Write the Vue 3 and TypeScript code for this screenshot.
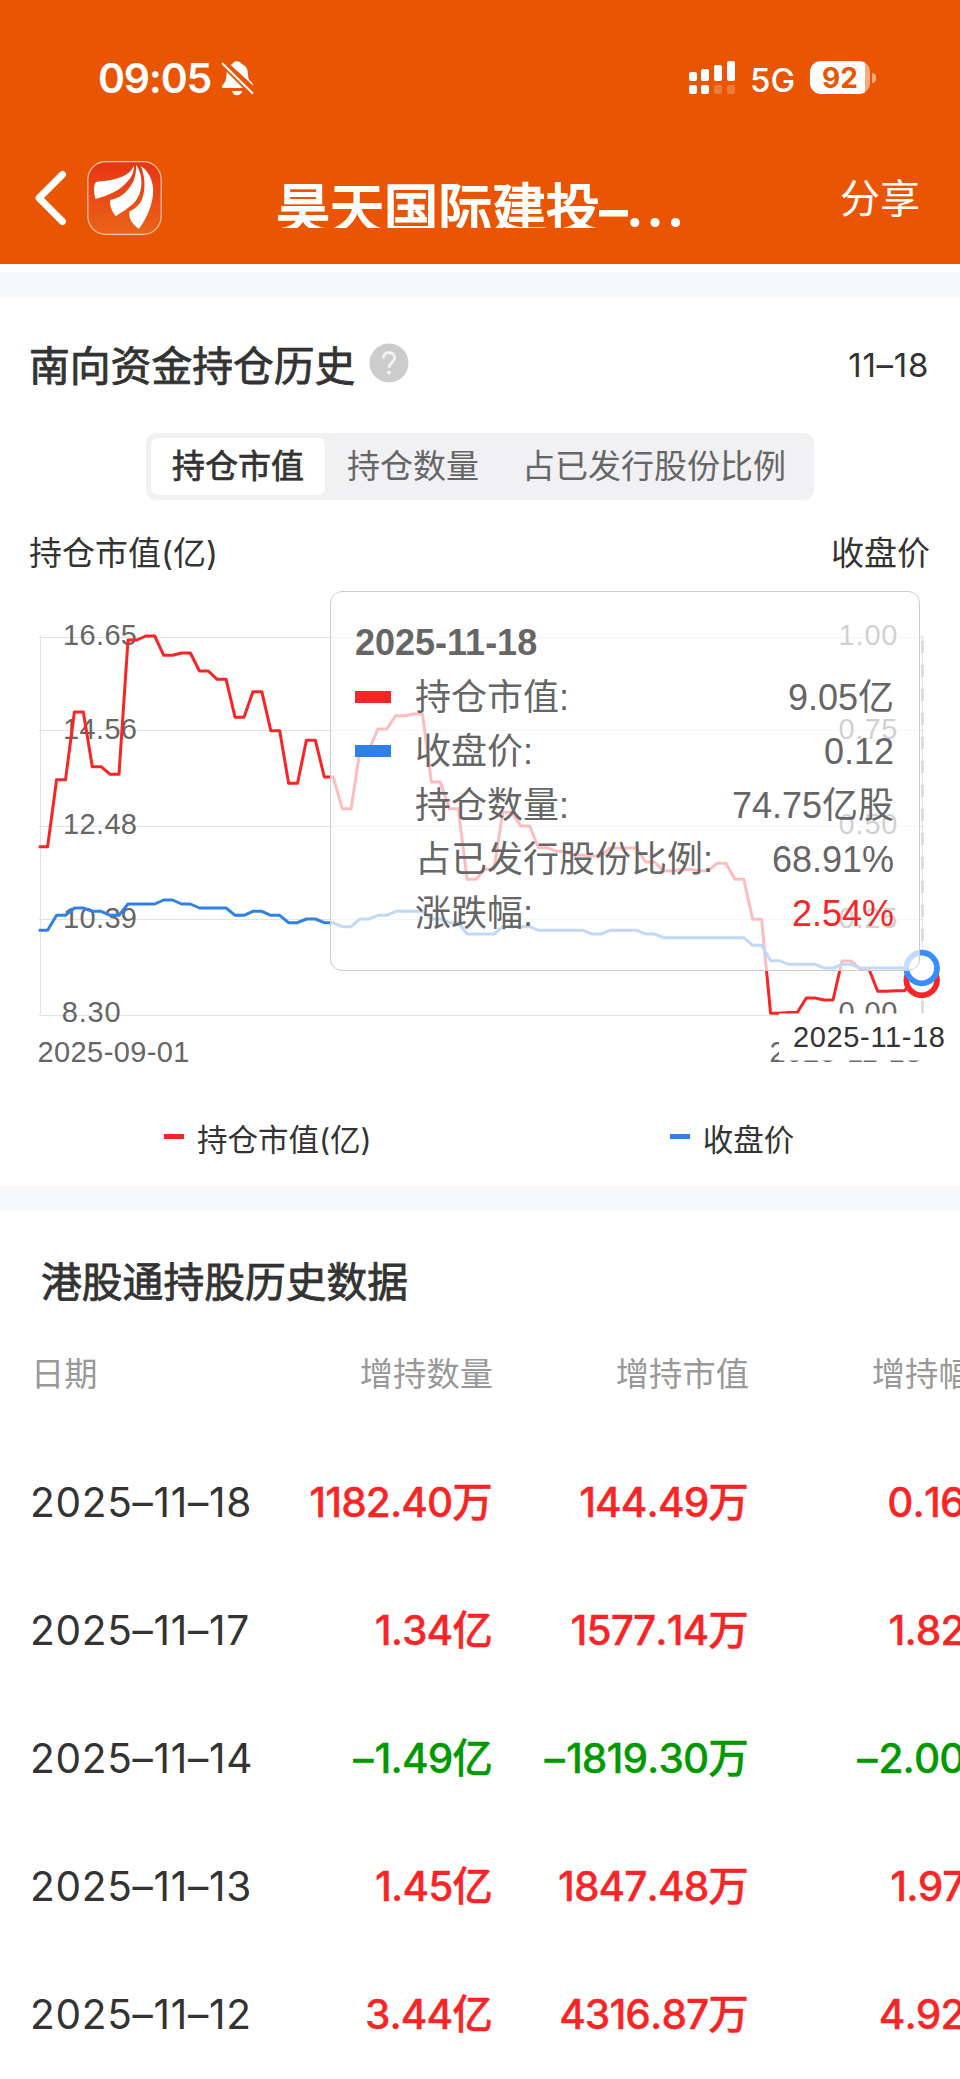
<script setup lang="ts">
interface HoldingRow {
  date: string
  amount: string
  value: string
  ratio: string
  down?: boolean
}

const tabs: string[] = ['持仓市值', '持仓数量', '占已发行股份比例']
const columns: string[] = ['日期', '增持数量', '增持市值', '增持幅度']

const rows: HoldingRow[] = [
  { date: '2025–11–18', amount: '1182.40万', value: '144.49万', ratio: '0.16%' },
  { date: '2025–11–17', amount: '1.34亿', value: '1577.14万', ratio: '1.82%' },
  { date: '2025–11–14', amount: '–1.49亿', value: '–1819.30万', ratio: '–2.00%', down: true },
  { date: '2025–11–13', amount: '1.45亿', value: '1847.48万', ratio: '1.97%' },
  { date: '2025–11–12', amount: '3.44亿', value: '4316.87万', ratio: '4.92%' },
]

const tips = [
  { label: '持仓市值:', value: '9.05亿', mark: 'red' },
  { label: '收盘价:', value: '0.12', mark: 'blue' },
  { label: '持仓数量:', value: '74.75亿股', mark: '' },
  { label: '占已发行股份比例:', value: '68.91%', mark: '' },
  { label: '涨跌幅:', value: '2.54%', mark: '', up: true },
]

// Each trading day is drawn as a flat step of two samples.
const X0 = 38.7
const STEP = 8.925
const marketValue: number[] = [
  846.7, 779.7, 712, 766.7, 774.3, 640, 636, 655.3, 653, 671, 679.3, 717.3, 691.7, 730.7, 783.3,
  740.3, 777, 808.7, 750, 729, 715.7, 714, 782, 808.7, 879.3, 869.3, 812.3, 826, 847.7, 851.3,
  855, 856, 848, 848, 862, 871, 869.5, 870.7, 863.3, 879.3, 919.3, 1013.3, 1012.5, 998, 1000,
  961, 968.5, 991.3, 990.8, 980,
]
const closePrice: number[] = [
  930.3, 915.3, 908, 911.3, 915.3, 904, 904, 900, 904, 908, 908, 915.3, 911.3, 915.3, 922.7, 919,
  922.7, 926.7, 919, 915.3, 911.3, 911.3, 919, 922.7, 934, 934, 926.7, 926.7, 930.3, 930.3, 930.3,
  934, 930.3, 930.3, 934, 937.7, 937.7, 937.7, 937.7, 937.7, 945.3, 960.7, 964.3, 964.3, 968,
  964.3, 968, 968, 968, 968,
]

function toPoints(values: number[]): string {
  return values
    .map((y, i) => `${(X0 + 2 * i * STEP).toFixed(1)},${y} ${(X0 + (2 * i + 1) * STEP).toFixed(1)},${y}`)
    .join(' ')
}

const redPoints = toPoints(marketValue)
const bluePoints = toPoints(closePrice)

const gridLines: number[] = [637.5, 730.5, 826.5, 919.5, 1015.5]
const leftLabels = [
  { text: '16.65', y: 645, x: 63, w: 74 },
  { text: '14.56', y: 739.3, x: 63, w: 74 },
  { text: '12.48', y: 833.7, x: 63, w: 74 },
  { text: '10.39', y: 928, x: 63, w: 74 },
  { text: '8.30', y: 1022.3, x: 61.7, w: 59 },
]
const rightLabels = [
  { text: '1.00', y: 645 },
  { text: '0.75', y: 739.3 },
  { text: '0.50', y: 833.7 },
  { text: '0.25', y: 928 },
  { text: '0.00', y: 1022.3 },
]
</script>

<template>
  <div class="page">
    <header class="header">
      <div class="status">
        <span class="clock">09:05</span>
        <svg class="bell" viewBox="663 60 99 108">
          <path d="M697 72C700 66 705 64 711 64S722 67 725 72C738 76 744 89 744 103C744 112 745 117 750 122L757 130C759 132 760 135 760 137L692 75Z" fill="#fff" />
          <path d="M680 95L729 144H669C665 144 665 139 668 135C677 125 679 118 680 95Z" fill="#fff" />
          <path d="M696 153H727C724 162 718 166 711 166S699 162 696 153Z" fill="#fff" />
          <path d="M668 71L757 159" stroke="#fff" stroke-width="6" stroke-linecap="round" />
        </svg>
        <svg class="signal" viewBox="0 0 46 33">
          <g fill="#fff">
            <rect x="0" y="11" width="8" height="9" rx="2" />
            <rect x="12" y="8" width="8" height="12" rx="2" />
            <rect x="25" y="4" width="8" height="16" rx="2" />
            <rect x="38" y="0" width="8" height="20" rx="2" />
            <rect x="0" y="24" width="8" height="9" rx="2" />
            <rect x="12" y="24" width="8" height="9" rx="2" />
            <rect x="25" y="24" width="8" height="9" rx="2" opacity=".22" />
            <rect x="38" y="24" width="8" height="9" rx="2" opacity=".22" />
          </g>
        </svg>
        <span class="network">5G</span>
        <div class="battery">
          <span class="level">92</span>
        </div>
        <i class="nub"></i>
      </div>
      <div class="nav">
        <svg class="back" viewBox="0 0 34 56">
          <path d="M28.5 4.5L5 28L28.5 51.5" fill="none" stroke="#fff" stroke-width="7" stroke-linecap="round" stroke-linejoin="round" />
        </svg>
        <svg class="logo" viewBox="262 363 224 222">
          <defs>
            <linearGradient id="logoFill" x1="0" y1="0" x2="0" y2="1">
              <stop offset="0" stop-color="#e73512" />
              <stop offset="1" stop-color="#ea6418" />
            </linearGradient>
          </defs>
          <rect x="264" y="365" width="220" height="218" rx="54" fill="url(#logoFill)" stroke="#fbc8ac" stroke-width="3.5" />
          <g fill="#fff">
            <path d="M287 477C282 460 281 440 286 430C290 423 296 425 312 423C350 418 389 409 402 377C403 395 396 409 386 421C362 452 328 466 287 477Z" />
            <path d="M409 374C409 402 405 420 390 441C376 461 357 476 331 480C329 498 337 515 348 529C372 510 405 497 418 464C430 434 426 398 409 374Z" />
            <path d="M423 378C434 405 437 436 431 462C426 489 409 506 389 514C385 538 400 554 417 567C443 532 460 489 460 452C460 422 446 392 423 378Z" />
          </g>
        </svg>
        <h1 class="title">昊天国际建投<span class="dash">–</span><span class="dots">...</span></h1>
        <span class="share">分享</span>
      </div>
    </header>

    <div class="divider first"></div>

    <section class="history">
      <div class="heading">
        <h2>南向资金持仓历史</h2>
        <svg class="help" viewBox="0 0 40 40">
          <circle cx="20" cy="20" r="19.5" fill="#ccc" />
          <path d="M14.3 15.4C14.3 11.6 16.8 9.5 20 9.5S25.7 11.7 25.7 14.7C25.7 19 20 19.5 20 24.8" fill="none" stroke="#f4f4f4" stroke-width="2.8" />
          <circle cx="20" cy="29.6" r="2" fill="#f4f4f4" />
        </svg>
        <span class="date">11–18</span>
      </div>
      <div class="segment">
        <span v-for="(tab, i) in tabs" :key="tab" class="tab" :class="{ active: i === 0 }">{{ tab }}</span>
      </div>
      <div class="axis-names">
        <span>持仓市值(亿)</span>
        <span>收盘价</span>
      </div>

      <div class="chart">
        <svg class="plot" viewBox="0 580 960 500">
          <g class="grid">
            <path v-for="y in gridLines" :key="y" :d="`M39 ${y}H924`" />
            <path d="M40.5 635V1014M922.5 635V1014" />
          </g>
          <g class="tick">
            <text v-for="l in leftLabels" :key="l.text" :x="l.x" :y="l.y" :textLength="l.w">{{ l.text }}</text>
            <text v-for="l in rightLabels" :key="l.text" x="838.5" :y="l.y" textLength="59">{{ l.text }}</text>
            <text x="37.5" y="1062" textLength="152">2025-09-01</text>
            <text x="769.5" y="1062" textLength="152">2025-11-18</text>
          </g>
          <path d="M922.5 641V1014" stroke="#ddd" stroke-width="3" stroke-dasharray="12 12" />
          <polyline :points="redPoints" stroke="#f82425" />
          <polyline :points="bluePoints" stroke="#2f80e7" />
          <circle cx="921.7" cy="980" r="15.3" stroke="#fb2528" />
          <circle cx="921.7" cy="968" r="15.3" stroke="#388efc" />
          <rect x="779" y="1013.5" width="181" height="47" fill="#fff" />
          <text class="pointer" x="793" y="1047" textLength="152">2025-11-18</text>
        </svg>
        <div class="tooltip">
          <div class="tip-title">2025-11-18</div>
          <div v-for="tip in tips" :key="tip.label" class="tip-row">
            <i class="mark" :class="tip.mark"></i>
            <span>{{ tip.label }}</span>
            <span class="tip-value" :class="{ up: tip.up }">{{ tip.value }}</span>
          </div>
        </div>
      </div>

      <div class="legend">
        <span class="legend-item"><i class="red"></i>持仓市值(亿)</span>
        <span class="legend-item"><i class="blue"></i>收盘价</span>
      </div>
    </section>

    <div class="divider"></div>

    <section class="records">
      <h2>港股通持股历史数据</h2>
      <div class="record head">
        <span v-for="c in columns" :key="c">{{ c }}</span>
      </div>
      <div v-for="r in rows" :key="r.date" class="record" :class="{ down: r.down }">
        <span class="day">{{ r.date }}</span>
        <span class="num">{{ r.amount }}</span>
        <span class="num">{{ r.value }}</span>
        <span class="num">{{ r.ratio }}</span>
      </div>
    </section>
  </div>
</template>

<style>
body {
  margin: 0;
  background: #fff;
}
</style>

<style scoped>
.page {
  width: 960px;
  height: 2079px;
  overflow: hidden;
  background: #fff;
  color: #333;
  font-family: Inter, "Noto Sans CJK SC", sans-serif;
}
h1,
h2 {
  margin: 0;
  font-weight: 400;
}
svg {
  display: block;
  flex: none;
}
.header {
  height: 264px;
  background: #ea5504;
  color: #fff;
}
.status {
  display: flex;
  align-items: center;
  box-sizing: border-box;
  height: 156px;
  padding: 0 0 1px 98px;
}
.clock {
  width: 123px;
  font-size: 41px;
  font-weight: 600;
  letter-spacing: -1.2px;
}
.bell {
  width: 33px;
  height: 36px;
}
.signal {
  width: 46px;
  height: 33px;
  margin-left: 435px;
}
.network {
  flex: none;
  margin: 5px 0 0 15px;
  width: 60px;
  font-size: 33px;
  font-weight: 500;
}
.battery {
  flex: none;
  width: 60px;
  height: 33px;
  border-radius: 11px;
  background: linear-gradient(90deg, #fff 55px, #f6aa80 55px);
  text-align: center;
}
.level {
  display: block;
  color: #ea5504;
  font-size: 28px;
  font-weight: 700;
  line-height: 34px;
}
.nub {
  width: 4px;
  height: 10px;
  margin-left: 2px;
  border-radius: 0 5px 5px 0;
  background: #f6aa80;
}
.nav {
  display: flex;
  align-items: center;
  height: 84px;
}
.back {
  width: 34px;
  height: 56px;
  margin-left: 34px;
}
.logo {
  width: 75px;
  height: 74px;
  margin-left: 19px;
}
.title {
  display: flex;
  width: 440px;
  height: 54px;
  margin: 6px 0 0 114px;
  overflow: hidden;
  font-size: 54px;
  line-height: 71px;
  white-space: nowrap;
  -webkit-text-stroke: 2px #fff;
}
.dash {
  line-height: 73px;
}
.dots {
  letter-spacing: 4.8px;
  line-height: 66px;
}
.share {
  margin: -4px 0 0 124px;
  font-size: 40px;
}
.divider {
  height: 25px;
  background: #f7f8fa;
}
.divider.first {
  margin-top: 8px;
}
.history {
  height: 889px;
}
.heading {
  display: flex;
  align-items: center;
  height: 136px;
  padding: 0 31px 0 29px;
}
h2 {
  font-size: 40.8px;
  line-height: 60px;
  -webkit-text-stroke: 0.8px #333;
}
.heading h2 {
  margin-top: 1px;
}
.help {
  width: 40px;
  height: 40px;
  margin: -5px 0 0 14px;
}
.date {
  margin-left: auto;
  font-size: 33px;
  font-kerning: none;
  letter-spacing: 0.7px;
}
.segment {
  display: flex;
  box-sizing: border-box;
  width: 668px;
  height: 67px;
  margin-left: 146px;
  padding: 5px;
  border-radius: 10px;
  background: #f1f1f4;
  color: #666;
  font-size: 33px;
  line-height: 57px;
}
.tab {
  padding: 0 21px 0 22px;
}
.tab.active {
  padding: 0 21px;
  border-radius: 7px;
  background: #fff;
  color: #333;
  -webkit-text-stroke: 0.7px #333;
}
.axis-names {
  display: flex;
  justify-content: space-between;
  height: 80px;
  padding: 0 30px 0 29px;
  font-size: 33px;
  line-height: 106px;
}
.chart {
  position: relative;
  height: 500px;
}
.plot {
  width: 960px;
  height: 500px;
}
.grid path {
  stroke: #e2e2e2;
}
.tick text,
.pointer {
  fill: #666;
  font-family: "Liberation Sans", Arial, sans-serif;
  font-size: 29px;
}
.plot .pointer {
  fill: #333;
}
polyline {
  fill: none;
  stroke-width: 3;
  stroke-linejoin: round;
}
circle[stroke] {
  fill: #fff;
  stroke-width: 5.8;
}
.tooltip {
  position: absolute;
  left: 330px;
  top: 11px;
  box-sizing: border-box;
  width: 590px;
  height: 380px;
  padding: 24px 25px 0 24px;
  border: 1px solid #ccc;
  border-radius: 12px;
  background: rgba(255, 255, 255, 0.7);
  color: #666;
  font-family: "Liberation Sans", "Noto Sans CJK SC", sans-serif;
  font-size: 36px;
}
.tip-title {
  height: 55px;
  font-weight: 700;
  line-height: 54px;
}
.tip-row {
  display: flex;
  align-items: center;
  height: 54px;
  line-height: 54px;
}
.mark {
  width: 36px;
  height: 12px;
  margin: -2px 24px 0 0;
}
.red {
  background: #f82425;
}
.blue {
  background: #2f80e7;
}
.tip-value {
  margin-left: auto;
}
.up {
  color: #f82425;
}
.legend {
  display: flex;
  align-items: center;
  box-sizing: border-box;
  height: 106px;
  padding-top: 10px;
  font-size: 30.5px;
}
.legend-item {
  display: flex;
  align-items: center;
  margin-left: 164px;
}
.legend-item + .legend-item {
  margin-left: 298px;
}
.legend-item i {
  width: 20px;
  height: 5px;
  margin: -3px 13px 0 0;
}
.records h2 {
  height: 60px;
  padding: 41px 0 0 41px;
}
.record {
  display: grid;
  grid-template-columns: 237px 256px 256px 256px;
  width: 1005px;
  height: 128px;
  color: #f82425;
  font-size: 40.6px;
  font-weight: 500;
  font-kerning: none;
  letter-spacing: -0.9px;
  line-height: 126px;
  text-align: right;
  white-space: nowrap;
  -webkit-text-stroke: 0.3px currentColor;
}
.record span:first-child {
  padding-left: 31px;
  text-align: left;
}
.num {
  padding-right: 1px;
}
.record.down {
  color: #090;
}
.down .num::first-letter {
  letter-spacing: 1px;
}
.record span.day {
  padding-left: 30px;
  color: #333;
  font-weight: 400;
  letter-spacing: 0.7px;
  -webkit-text-stroke: 0;
}
.record.head {
  color: #999;
  font-size: 33.3px;
  font-weight: 400;
  letter-spacing: 0;
  line-height: 124px;
  -webkit-text-stroke: 0;
}
</style>
